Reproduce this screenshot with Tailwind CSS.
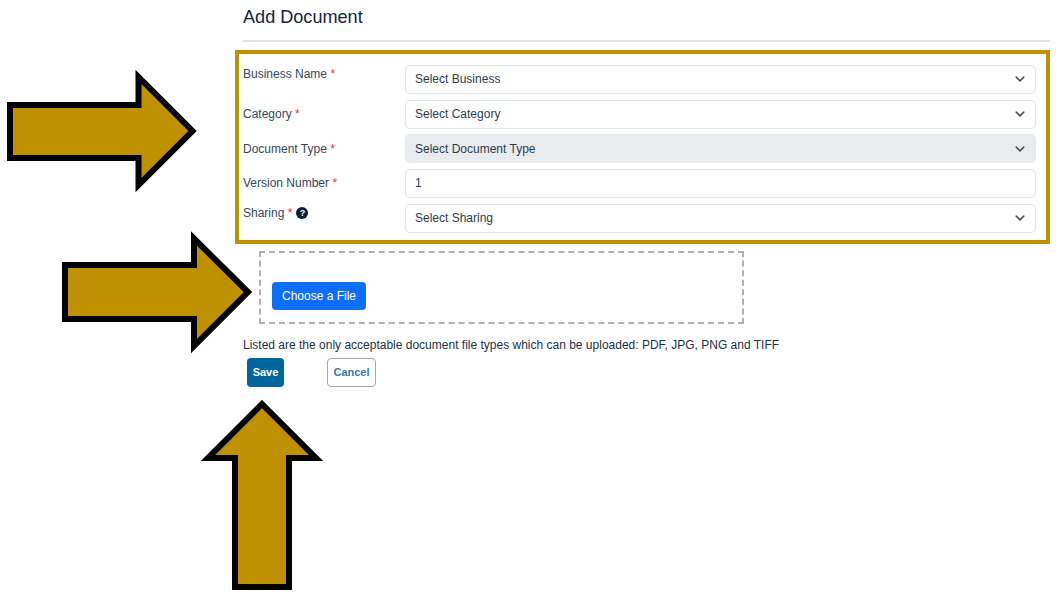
<!DOCTYPE html>
<html lang="en">
<head>
  <meta charset="UTF-8" />
  <meta name="viewport" content="width=device-width, initial-scale=1.0"/>
  <title>Add Document</title>
  <script src="https://cdn.jsdelivr.net/npm/@tailwindcss/browser@4"></script>
</head>
<body class="relative w-[1060px] h-[597px] overflow-hidden bg-white font-['Liberation_Sans',Arial,sans-serif] text-xs text-[#1c2f4a]">

  <div class="ml-[235px] w-[815px]">
    <h1 class="ml-2 pt-[6px] h-[40px] text-[18.1px] leading-[22px] text-[#12233f]">Add Document</h1>
    <div class="ml-2 h-[2px] bg-[#e1e4e8]"></div>

    <!-- Highlighted fields -->
    <div class="mt-2 h-[194px] border-4 border-[#bf9000] pl-1 pr-[10px] pt-[11px] flex flex-col gap-[5.7px]">
      <div class="flex">
        <label class="w-[162px] pt-[2px] leading-[14px] text-[#33465f]">Business Name <span class="text-red-500">*</span></label>
        <div class="flex-1 h-[29px] flex items-center justify-between pl-[9px] pr-[10px] pb-px border border-[#e3e6ea] rounded-[5px] text-[#2c3b50]">
          Select Business
          <svg class="w-[10px] h-[10px]" viewBox="0 0 16 16" fill="none" stroke="#4a4f55" stroke-width="2.4" stroke-linecap="round" stroke-linejoin="round"><path d="m2 5 6 6 6-6"/></svg>
        </div>
      </div>
      <div class="flex items-center">
        <label class="w-[162px] leading-[14px] text-[#33465f]">Category <span class="text-red-500">*</span></label>
        <div class="flex-1 h-[29px] flex items-center justify-between pl-[9px] pr-[10px] border border-[#e3e6ea] rounded-[5px] text-[#2c3b50]">
          Select Category
          <svg class="w-[10px] h-[10px]" viewBox="0 0 16 16" fill="none" stroke="#4a4f55" stroke-width="2.4" stroke-linecap="round" stroke-linejoin="round"><path d="m2 5 6 6 6-6"/></svg>
        </div>
      </div>
      <div class="flex items-center">
        <label class="w-[162px] leading-[14px] text-[#33465f]">Document Type <span class="text-red-500">*</span></label>
        <div class="flex-1 h-[29px] flex items-center justify-between pl-[9px] pr-[10px] border border-[#e9ecef] bg-[#e9ecef] rounded-[5px] text-[#2c3b50]">
          Select Document Type
          <svg class="w-[10px] h-[10px]" viewBox="0 0 16 16" fill="none" stroke="#4a4f55" stroke-width="2.4" stroke-linecap="round" stroke-linejoin="round"><path d="m2 5 6 6 6-6"/></svg>
        </div>
      </div>
      <div class="flex items-center">
        <label class="w-[162px] pb-px leading-[14px] text-[#33465f]">Version Number <span class="text-red-500">*</span></label>
        <div class="flex-1 h-[29px] flex items-center pl-[9px] pr-[10px] pb-px border border-[#e3e6ea] rounded-[5px] text-[#2c3b50]">1</div>
      </div>
      <div class="flex">
        <label class="w-[162px] pt-[2px] flex items-center gap-1 h-[16px] leading-[14px] text-[#33465f]">
          <span>Sharing <span class="text-red-500">*</span></span>
          <span class="w-3 h-3 rounded-full bg-[#0b2038] text-white text-[9px] leading-3 font-bold text-center">?</span>
        </label>
        <div class="flex-1 h-[29px] flex items-center justify-between pl-[9px] pr-[10px] pb-px border border-[#e3e6ea] rounded-[5px] text-[#2c3b50]">
          Select Sharing
          <svg class="w-[10px] h-[10px]" viewBox="0 0 16 16" fill="none" stroke="#4a4f55" stroke-width="2.4" stroke-linecap="round" stroke-linejoin="round"><path d="m2 5 6 6 6-6"/></svg>
        </div>
      </div>
    </div>

    <!-- Upload -->
    <div class="mt-[7px] ml-6 w-[485px] h-[73px] border-2 border-dashed border-[#b0b0b0] pl-[11px] pt-[29px]">
      <button class="w-[94px] h-[28px] bg-[#0d6efd] text-white rounded-[4px] text-xs">Choose a File</button>
    </div>

    <p class="ml-2 mt-[13px] leading-[16px] text-[#1c2f4a]">Listed are the only acceptable document file types which can be uploaded: PDF, JPG, PNG and TIFF</p>

    <div class="ml-3 mt-[5px] flex gap-[43px]">
      <button class="w-[37px] h-[29px] bg-[#00659c] text-white rounded-[4px] text-[11px] font-bold">Save</button>
      <button class="w-[49px] h-[29px] bg-white border border-[#a4a6ad] text-[#2c7cab] rounded-[4px] text-[11px] font-bold">Cancel</button>
    </div>
  </div>

  <!-- Annotation arrows -->
  <svg class="absolute left-0 top-0 pointer-events-none" width="1060" height="597" viewBox="0 0 1060 597" fill="#bf9000" stroke="#000" stroke-width="6" stroke-miterlimit="10">
    <polygon points="10,105 138.5,105 138.5,77 192.5,131 138.5,185 138.5,158 10,158"/>
    <polygon points="65,265 194,265 194,238.5 248,292 194,346 194,319 65,319"/>
    <polygon points="262,404 316,458 289,458 289,587 235,587 235,458 208,458"/>
  </svg>

</body>
</html>
